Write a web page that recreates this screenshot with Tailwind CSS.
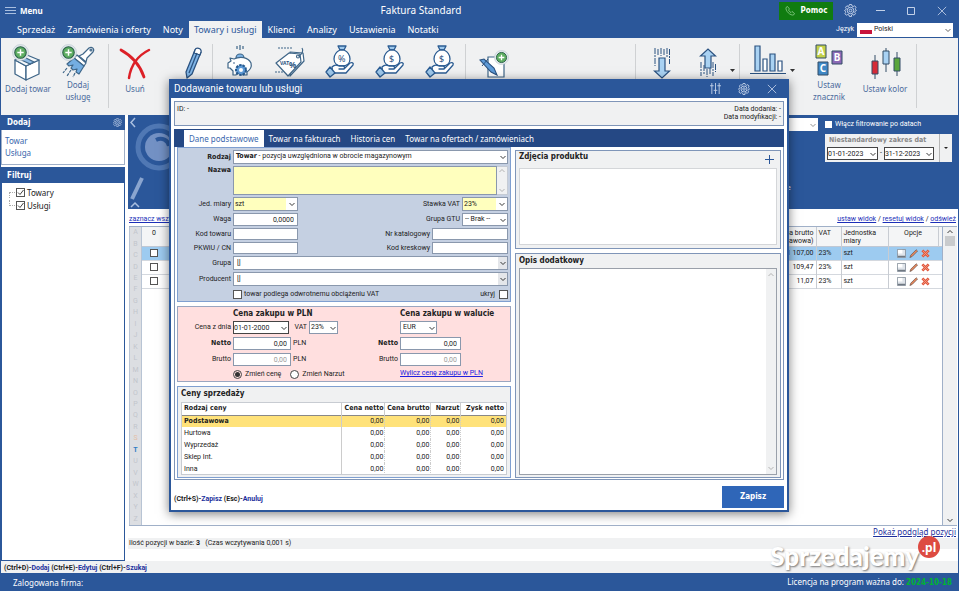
<!DOCTYPE html>
<html lang="pl">
<head>
  <meta charset="UTF-8" />
  <meta name="viewport" content="width=device-width, initial-scale=1.0" />
  <title>Faktura Standard</title>
  <script src="https://cdn.jsdelivr.net/npm/@tailwindcss/browser@4"></script>
  <style>
    body { font-family: Roboto, "Liberation Sans", sans-serif; }
    .ui { font-family: "Noto Sans", "Open Sans", sans-serif; }
    .hd { font-family: "DejaVu Sans Condensed", "DejaVu Sans", sans-serif; font-weight: 700; }
  </style>
</head>
<body class="relative h-screen flex flex-col overflow-hidden bg-[#2b579a] text-[7px] leading-[9px] text-[#222]">

  <!-- shared icons -->
  <svg class="hidden">
    <symbol id="gear" viewBox="0 0 24 24">
      <g fill="none" stroke="currentColor" stroke-width="1.8" stroke-linejoin="round">
        <path d="M10 1h4l.8 2.700 2.200 1 2.600-1.400 2.600 2.800-1.400 2.500.9 2.200L23 12l-2.300 1.200-.9 2.200 1.400 2.500-2.600 2.800-2.600-1.400-2.200 1L14 23h-4l-.8-2.700-2.200-1-2.600 1.400-2.600-2.800 1.400-2.500-.9-2.200L1 12l2.300-1.200.9-2.200-1.400-2.500 2.600-2.800L8 4.700l1.200-1z" />
        <circle cx="12" cy="12" r="6" />
        <circle cx="12" cy="12" r="2.500" />
      </g>
    </symbol>
    <symbol id="chev" viewBox="0 0 8 8">
      <path d="M1.500 3 4 5.500 6.500 3" fill="none" stroke="currentColor" stroke-width=".9" />
    </symbol>
    <symbol id="tick" viewBox="0 0 9 9">
      <path d="M2 4.500 4 6.500 7.500 2" fill="none" stroke="#444" stroke-width="1" />
    </symbol>
    <symbol id="close" viewBox="0 0 12 12">
      <path d="M1 1l10 10M11 1 1 11" fill="none" stroke="currentColor" stroke-width="1" />
    </symbol>
    <symbol id="plusball" viewBox="0 0 16 16">
      <circle cx="8" cy="8" r="7.500" fill="#e3e8ec" stroke="#b9c6cf" stroke-width=".6" />
      <circle cx="8" cy="8" r="5.400" fill="#5fae62" stroke="#275f47" stroke-width="1" />
      <path d="M8 5v6M5 8h6" stroke="#fff" stroke-width="1.400" />
    </symbol>
    <symbol id="bag" viewBox="0 0 30 34">
      <g stroke="#2b5c92" stroke-width="1.300" stroke-linejoin="round" stroke-linecap="round">
        <path d="M13 2h8l-2 4h-4z" fill="#9fc9ec" />
        <path d="M15 6h4c4 2 6 6 6 9 0 5-4 7-8 7s-8-2-8-7c0-3 2-7 6-9z" fill="#fff" />
        <path d="M7 23c3-3 5-2 7-1h4c2 0 2 3 0 3h-4 5l6-6c2-1 4 0 3 2l-7 8H10l-2 1z" fill="#fff" />
        <path d="M5 23l5 6-5 4-4-5z" fill="#9fc9ec" />
      </g>
    </symbol>
    <symbol id="floppy" viewBox="0 0 10 10">
      <path d="M.5.5h9v9h-9z" fill="#dfe4ea" stroke="#87919c" />
      <path d="M1 1h5v4H1z" fill="#fff" /><path d="M1 7.500h8V9H1z" fill="#6f7882" />
    </symbol>
    <symbol id="edit" viewBox="0 0 10 10">
      <path d="M1 9.500 2 6.800l6-6 1.500 1.500-6 6z" fill="#e8875a" stroke="#5b4a44" stroke-width=".7" />
    </symbol>
    <symbol id="del" viewBox="0 0 10 10">
      <path d="M1.500 1.500l7 7M8.500 1.500l-7 7" stroke="#e0573e" stroke-width="3" />
      <path d="M2 2l6 6M8 2 2 8" stroke="#f39a80" stroke-width="1" />
    </symbol>
  </svg>

  <!-- title bar -->
  <header class="ui relative flex h-[21px] flex-none items-center justify-between pl-[5px] pr-[12px] text-white">
    <button class="flex items-center gap-[4px]">
      <svg class="h-[8px] w-[11px]" viewBox="0 0 11 8"><path d="M0 .5h11M0 3.500h11M0 6.500h11" stroke="#a9bfe0" /></svg>
      <span class="text-[8px] font-bold">Menu</span>
    </button>
    <h1 class="pointer-events-none absolute inset-x-0 pr-[117px] text-center text-[10px] leading-[21px]">Faktura Standard</h1>
    <div class="flex items-center text-[#c3d1e8]">
      <button class="hd flex h-[18px] w-[54px] items-center justify-center gap-[6px] bg-[#107c10] text-[8px] text-white">
        <svg class="h-[10px] w-[10px]" viewBox="0 0 10 10"><path d="M1 1.500 2.500.5l2 2.500-1 1c.5 1.200 1.300 2 2.500 2.500l1-1 2.500 2-1 1.500C5.500 9.800.2 5 1 1.500z" fill="none" stroke="#8fd08f" stroke-width=".8" /></svg>
        Pomoc
      </button>
      <button class="ml-[11px]" aria-label="Opcje"><svg class="h-[13px] w-[13px]"><use href="#gear" /></svg></button>
      <button class="ml-[19px]" aria-label="Minimalizuj"><svg class="h-[9px] w-[9px]" viewBox="0 0 9 9"><path d="M0 4.500h9" stroke="currentColor" /></svg></button>
      <button class="ml-[22px]" aria-label="Maksymalizuj"><svg class="h-[8px] w-[8px]" viewBox="0 0 8 8"><path d="M.5.5h7v7h-7z" fill="none" stroke="currentColor" /></svg></button>
      <button class="ml-[22px]" aria-label="Zamknij"><svg class="h-[10px] w-[10px]"><use href="#close" /></svg></button>
    </div>
  </header>

  <!-- main tabs -->
  <nav class="flex h-[17px] flex-none items-stretch justify-between pl-[11px] pr-[6px] text-white">
    <div class="ui flex text-[9px] leading-[17px]">
      <a href="#" class="px-[6px]">Sprzedaż</a>
      <a href="#" class="px-[6px]">Zamówienia i oferty</a>
      <a href="#" class="px-[6px]">Noty</a>
      <a href="#" class="bg-[#f0f1f2] px-[5px] text-[#2b579a]">Towary i usługi</a>
      <a href="#" class="px-[6px]">Klienci</a>
      <a href="#" class="px-[6px]">Analizy</a>
      <a href="#" class="px-[6px]">Ustawienia</a>
      <a href="#" class="px-[6px]">Notatki</a>
    </div>
    <div class="flex items-center gap-[3px]">
      <label for="lang">Język</label>
      <div class="relative">
        <select id="lang" class="block h-[14px] w-[96px] appearance-none bg-white pl-[17px] text-[7px] text-[#222]"><option>Polski</option></select>
        <span class="pointer-events-none absolute left-[3px] top-[7px] h-[4px] w-[12px] bg-[#c8143c]"></span>
        <svg class="pointer-events-none absolute right-[1px] top-[3px] h-[8px] w-[8px] text-[#555]"><use href="#chev" /></svg>
      </div>
    </div>
  </nav>

  <!-- ribbon -->
  <section class="ui ml-px mr-px flex h-[77px] flex-none items-start bg-[#f0f1f2] pl-[2px] pt-[6px] text-center text-[8px] leading-[12px] text-[#4a6a9c]">
    <button class="flex w-[50px] flex-none flex-col items-center gap-[1px]">
      <svg class="h-[38px] w-[32px]" viewBox="0 0 32 38">
        <g stroke="#3f6688" stroke-width="1.300" stroke-linejoin="round">
          <path d="M3 16l11 6v14L3 30z" fill="#fff" /><path d="M14 22l13-6v14l-13 6z" fill="#fff" />
          <path d="M3 16l12-5 12 5-13 6z" fill="#f4f8fb" /><path d="M6 14.500l12 5.500 4-2-11-5.500z" fill="#8ebce6" />
        </g>
        <use href="#plusball" x="0" y="0" width="17" height="17" />
      </svg>
      Dodaj towar
    </button>
    <button class="flex w-[50px] flex-none flex-col items-center">
      <svg class="h-[35px] w-[36px]" viewBox="0 0 36 35">
        <g stroke="#3f6688" stroke-width="1.200" stroke-linejoin="round">
          <path d="M19 12l4-2 6-6c3-2 6 1 4 4l-6 6-1 4z" fill="#fff" /><circle cx="31" cy="6" r="1" fill="#fff" />
          <path d="M17 11l9 8-2 3-10-8z" fill="#fff" />
          <path d="M14 14l10 8-5 8-3-2 1-3-4 1-2-2 2-3-4 1-2-2z" fill="#74aee2" />
          <path d="M7 24l-4 5M11 26l-4 6M15 29l-2 4" stroke-dasharray="3 1" />
        </g>
        <use href="#plusball" x="0" y="0" width="17" height="17" />
      </svg>
      <span class="w-[30px]">Dodaj usługę</span>
    </button>
    <span class="ml-[5px] h-[64px] w-px bg-[#cfd1d3]"></span>
    <button class="flex w-[52px] flex-none flex-col items-center gap-[1px]">
      <svg class="h-[38px] w-[32px]" viewBox="0 0 32 38"><g fill="none" stroke="#dc2027" stroke-linecap="round"><path d="M2 6c11 6 19 15 23 27" stroke-width="2.800" /><path d="M30 6C20 11 12 20 10 34" stroke-width="2.500" /></g></svg>
      Usuń
    </button>
    <button class="ml-[13px] w-[38px] flex-none" aria-label="Edytuj">
      <svg class="mx-auto h-[36px] w-[20px]" viewBox="0 0 20 36"><g stroke="#2b5280" stroke-width="1.300" stroke-linejoin="round"><path d="M12 6l6 2L9 30l-5 4-1-6z" fill="#80b5e6" /><path d="M12 6c1-3 7-2 6 2l-1 3-6-2z" fill="#fff" /><path d="M14 9 6 29" fill="none" /></g></svg>
    </button>
    <span class="h-[64px] w-px bg-[#cfd1d3]"></span>
    <button class="ml-[2px] w-[50px] flex-none" aria-label="Magazyn">
      <svg class="mx-auto h-[34px] w-[28px]" viewBox="0 0 28 34"><g stroke="#3f6688" stroke-width="1.200" stroke-linejoin="round"><path d="M14 1v5M11 2v3M17 2v3" fill="none" /><path d="M10 14a4 4 0 1 1 8 0z" fill="#80b5e6" /><path d="M4 14l4 1c6-3 14-2 17 4 1 4-1 7-4 9v3h-4l-1-2h-5l-1 2H7v-4l-3-3H2v-5l3-2z" fill="#fff" /></g>
        <circle cx="8" cy="19" r=".8" fill="#2b5280" />
        <circle cx="15" cy="26" r="5" fill="#5e9bd8" stroke="#275a8e" stroke-width="2" stroke-dasharray="2.500 1" /><circle cx="15" cy="26" r="2" fill="#fff" /></svg>
    </button>
    <button class="w-[50px] flex-none" aria-label="Rabaty">
      <svg class="mx-auto h-[34px] w-[32px]" viewBox="0 0 32 34"><g fill="#fff" stroke="#3f6688" stroke-width="1.200" stroke-linejoin="round"><path d="M16 8 29 9l1 8-14 15z" /><path d="M2 19 15 9l11 1 1 8-13 14z" /><circle cx="24" cy="12.500" r="1.500" /><path d="M24 12c4-1 6-5 4-8" fill="none" /><path d="M4 4h14M1 28h9" stroke-dasharray="2 1" /></g>
        <g fill="#2b5280" font-weight="700"><text x="6" y="21" font-size="5">VAT</text><text x="15" y="24" font-size="8">%</text></g></svg>
    </button>
    <button class="w-[50px] flex-none" aria-label="Narzut procentowy">
      <svg class="mx-auto h-[34px] w-[30px]" viewBox="0 0 30 34"><use href="#bag" width="30" height="34" /><text x="13" y="18" font-size="9" fill="#2b5280">%</text></svg>
    </button>
    <button class="w-[50px] flex-none" aria-label="Ceny netto">
      <svg class="mx-auto h-[34px] w-[30px]" viewBox="0 0 30 34"><use href="#bag" width="30" height="34" /><text x="14" y="18" font-size="9" fill="#2b5280">$</text></svg>
    </button>
    <button class="w-[50px] flex-none" aria-label="Ceny brutto">
      <svg class="mx-auto h-[34px] w-[30px]" viewBox="0 0 30 34"><use href="#bag" width="30" height="34" /><text x="14" y="18" font-size="9" fill="#2b5280">$</text></svg>
    </button>
    <span class="h-[64px] w-px bg-[#cfd1d3]"></span>
    <button class="w-[56px] flex-none" aria-label="Nowa notatka">
      <svg class="mx-auto h-[36px] w-[30px]" viewBox="0 0 30 36"><path d="M9 13h16v20H9z" fill="#fff" stroke="#3f6688" stroke-width="1.200" /><path d="M1 16l4-1 10 9 3 7-6-3z" fill="#5e9bd8" stroke="#2b5280" stroke-width="1.100" /><path d="M3 22l6-7" stroke="#2b5280" /><use href="#plusball" x="15" y="6" width="15" height="15" /></svg>
    </button>
    <span class="ml-[113px] h-[64px] w-px bg-[#cfd1d3]"></span>
    <button class="w-[52px] flex-none" aria-label="Importuj">
      <svg class="mx-auto h-[36px] w-[18px]" viewBox="0 0 18 36"><path d="M6 14h6v13h4.500L9 34l-7.500-7H6z" fill="#a9d2f3" stroke="#2b5280" stroke-width="1.200" /><path d="M2 4v18M5 5v7M8 4v8M11 5v7M14 4v10M16.500 5v15" stroke="#2b5280" stroke-dasharray="6 1 2 1" /></svg>
    </button>
    <button class="flex w-[48px] flex-none items-end" aria-label="Eksportuj">
      <svg class="ml-[11px] h-[36px] w-[18px]" viewBox="0 0 18 36"><path d="M6 24V12H1.500L9 5l7.500 7H12v12z" fill="#a9d2f3" stroke="#2b5280" stroke-width="1.200" /><path d="M2 18v14M5 21v9M8 25v8M11 24v7M14 18v14M16.500 20v8" stroke="#2b5280" stroke-dasharray="6 1 2 1" /></svg>
      <svg class="mb-[8px] ml-[13px] h-[3px] w-[5px]" viewBox="0 0 5 3"><path d="M0 0h5L2.500 3z" fill="#333" /></svg>
    </button>
    <span class="ml-[3px] h-[64px] w-px bg-[#cfd1d3]"></span>
    <button class="flex w-[62px] flex-none items-end" aria-label="Statystyki">
      <svg class="ml-[10px] h-[32px] w-[36px]" viewBox="0 0 36 32"><g stroke="#2b5280" stroke-width="1.200"><path d="M5 2h5v25H5zM20 10h5v17h-5z" fill="#a9d2f3" /><path d="M13 15h4v12h-4zM28 17h4v10h-4z" fill="#fff" /><path d="M0 29.500h36" /></g></svg>
      <svg class="mb-[4px] ml-[4px] h-[3px] w-[5px]" viewBox="0 0 5 3"><path d="M0 0h5L2.500 3z" fill="#333" /></svg>
    </button>
    <button class="flex w-[54px] flex-none flex-col items-center gap-[1px]">
      <svg class="h-[34px] w-[28px]" viewBox="0 0 28 34">
        <g stroke="#334d66"><path d="M1 1h10v13H1z" fill="#c3d14b" /><path d="M17 7h10v13H17z" fill="#8b69b5" /><path d="M3 18h10v13H3z" fill="#3f87c4" /></g>
        <g fill="#fff" font-size="10" font-weight="700" text-anchor="middle"><text x="6" y="11">A</text><text x="22" y="17">B</text><text x="8" y="28">C</text></g>
      </svg>
      <span class="w-[36px]">Ustaw znacznik</span>
    </button>
    <button class="flex w-[58px] flex-none flex-col items-center gap-[1px]">
      <svg class="h-[38px] w-[32px]" viewBox="0 0 32 38"><path d="M6 11v24M17 4v24M28 8v24" stroke="#334d66" /><g stroke="#334d66"><path d="M3 17h6v13H3z" fill="#d52b38" /><path d="M14 7h6v13h-6z" fill="#a9d2f3" /><path d="M25 14h6v13h-6z" fill="#5aa63c" /></g></svg>
      Ustaw kolor
    </button>
    <span class="ml-[2px] h-[64px] w-px bg-[#cfd1d3]"></span>
  </section>

  <!-- workspace -->
  <main class="ml-px mr-px flex min-h-0 flex-1 gap-[3px] bg-white">
    <aside class="flex w-[124px] flex-none flex-col">
      <h2 class="hd flex h-[15px] flex-none items-center justify-between bg-[#2b579a] pl-[6px] pr-[3px] text-[8px] text-white">Dodaj <svg class="h-[9px] w-[9px] text-[#b9c9e4]"><use href="#gear" /></svg></h2>
      <div class="ui flex h-[35px] flex-none flex-col border border-t-0 border-[#a0b0c8] px-[3px] pt-[5px] text-[8px] leading-[12px] text-[#3a67ad]">
        <a href="#">Towar</a>
        <a href="#">Usługa</a>
      </div>
      <h2 class="hd mt-[2px] flex h-[16px] flex-none items-center bg-[#2b579a] pl-[6px] text-[8px] text-white">Filtruj</h2>
      <div class="flex min-h-0 flex-1 flex-col gap-[2px] border border-t-0 border-[#2b579a] pl-[7px] pt-[4px]">
        <label class="ui flex items-center text-[8px]"><span class="mr-[1px] mt-[5px] h-[6px] w-[6px] border-l border-t border-dotted border-[#aaa]"></span><span class="relative mr-[2px]"><input type="checkbox" checked class="block h-[9px] w-[9px] appearance-none border border-[#555]" /><svg class="pointer-events-none absolute inset-0 h-[9px] w-[9px]"><use href="#tick" /></svg></span>Towary</label>
        <label class="ui flex items-center text-[8px]"><span class="mb-[5px] mr-[1px] h-[6px] w-[6px] border-b border-l border-dotted border-[#aaa]"></span><span class="relative mr-[2px]"><input type="checkbox" checked class="block h-[9px] w-[9px] appearance-none border border-[#555]" /><svg class="pointer-events-none absolute inset-0 h-[9px] w-[9px]"><use href="#tick" /></svg></span>Usługi</label>
      </div>
    </aside>

    <section class="flex min-w-0 flex-1 flex-col">
      <!-- search band -->
      <div class="relative flex h-[94px] flex-none items-start justify-end gap-[7px] overflow-hidden bg-[#2b579a] pr-[6px] pt-[3px] text-white">
        <svg class="absolute left-0 top-0 h-[94px] w-[60px]" viewBox="0 0 60 94">
          <circle cx="31" cy="32" r="21" fill="none" stroke="#5078b4" stroke-width="5" />
          <circle cx="31" cy="32" r="14" fill="#7391c4" /><path d="M28 25c6-3 12 0 13 6" fill="none" stroke="#2b579a" stroke-width="4" />
          <path d="M14 63 4 84" stroke="#8aa5cf" stroke-width="4" />
          <path d="M7 3 3 7.500 7 12M3 92l4-4 4 4" fill="none" stroke="#a9bfe0" stroke-width="1.500" />
        </svg>
        <span class="absolute left-[659px] top-[69px]">e</span>
        <div class="relative w-[90px]">
          <select aria-label="Szukaj w" class="block h-[13px] w-full appearance-none bg-white"><option></option></select>
          <svg class="absolute right-[1px] top-[3px] h-[8px] w-[8px] text-[#888]"><use href="#chev" /></svg>
        </div>
        <div class="w-[127px]">
          <label class="flex h-[13px] items-center gap-[3px]"><input type="checkbox" class="h-[7px] w-[7px] appearance-none bg-white" />Włącz filtrowanie po datach</label>
          <div class="mt-[3px] flex h-[28px] bg-[#f0f1f2] text-[#222]">
            <div class="flex-1 border-r border-[#b5b5b5] px-[2px] pt-[2px]">
              <div class="hd pl-[2px] text-[7px] text-[#888]">Niestandardowy zakres dat</div>
              <div class="mt-[2px] flex items-center gap-[2px]">
                <span class="relative"><input type="text" aria-label="Od" value="01-01-2023" class="block h-[13px] w-[51px] border border-[#444] bg-white" /><svg class="absolute right-[1px] top-[3px] h-[8px] w-[8px]"><use href="#chev" /></svg></span>
                -
                <span class="relative"><input type="text" aria-label="Do" value="31-12-2023" class="block h-[13px] w-[50px] border border-[#444] bg-white" /><svg class="absolute right-[1px] top-[3px] h-[8px] w-[8px]"><use href="#chev" /></svg></span>
              </div>
            </div>
            <button class="flex w-[12px] items-center justify-center" aria-label="Zakres"><svg class="h-[2px] w-[4px]" viewBox="0 0 4 2"><path d="M0 0h4L2 2z" fill="#222" /></svg></button>
          </div>
        </div>
      </div>

      <div class="flex h-[17px] flex-none items-center justify-between pl-px pr-[2px] pt-[4px]">
        <a href="#" class="text-[#1c2fb8] underline">zaznacz wszystko</a>
        <span><a href="#" class="text-[#1c2fb8] underline">ustaw widok</a> / <a href="#" class="text-[#1c2fb8] underline">resetuj widok</a> / <a href="#" class="text-[#1c2fb8] underline">odśwież</a></span>
      </div>

      <!-- items grid -->
      <div class="mx-[1px] flex min-h-0 flex-1 border-b border-t border-[#a0b0c8]">
        <div id="letters" class="flex w-[13px] flex-none flex-col justify-around border-x border-[#b8c4d4] bg-[#dcdee2] text-center text-[#c2c5cc]"></div>
        <div class="min-w-0 flex-1 border-r border-[#a0b0c8]">
          <table class="w-full table-fixed border-collapse">
            <colgroup><col class="w-[24px]" /><col /><col class="w-[60px]" /><col class="w-[25px]" /><col class="w-[47px]" /><col class="w-[50px]" /><col class="w-[4px]" /></colgroup>
            <thead>
              <tr class="h-[19px] border-b border-[#c0c8d4] bg-[#f4f5f6] align-top leading-[8px]">
                <th class="pt-[2px] font-normal">0</th><th></th>
                <th class="border-r border-[#c8ccd2] pr-[2px] pt-[2px] text-right font-normal">Cena brutto (podstawowa)</th>
                <th class="border-r border-[#c8ccd2] pl-[2px] pt-[2px] text-left font-normal">VAT</th>
                <th class="border-r border-[#c8ccd2] pl-[2px] pt-[2px] text-left font-normal">Jednostka miary</th>
                <th class="border-r border-[#c8ccd2] pt-[2px] font-normal">Opcje</th><th></th>
              </tr>
            </thead>
            <tbody id="items"></tbody>
          </table>
        </div>
        <div class="flex w-[14px] flex-none flex-col items-center justify-between bg-[#f0f1f2] py-[1px]">
          <div class="flex flex-col items-center"><svg class="h-[8px] w-[8px] rotate-180"><use href="#chev" /></svg><span class="h-[10px] w-[10px] bg-[#c9cbcd]"></span></div>
          <svg class="h-[8px] w-[8px]"><use href="#chev" /></svg>
        </div>
      </div>
      <a href="#" class="ui flex-none self-end px-[2px] text-[8px] leading-[12px] text-[#1c2f9c] underline">Pokaż podgląd pozycji</a>
      <p class="flex h-[11px] flex-none items-center whitespace-pre bg-[#f0f1f2] px-[1px]">Ilość pozycji w bazie: <b>3</b>   (Czas wczytywania 0,001 s)</p>
      <div class="h-[12px] flex-none"></div>
    </section>
  </main>
  <p class="mx-px h-[12px] flex-none bg-[#f0f1f2] px-[3px] font-bold leading-[14px]">(Ctrl+D)-<a href="#" class="text-[#1c2f9c]">Dodaj</a> (Ctrl+E)-<a href="#" class="text-[#1c2f9c]">Edytuj</a> (Ctrl+F)-<a href="#" class="text-[#1c2f9c]">Szukaj</a></p>

  <footer class="ui flex h-[18px] flex-none items-center justify-between pl-[13px] pr-[7px] text-[8px] text-white">
    <span>Zalogowana firma:</span>
    <span>Licencja na program ważna do: <b class="hd text-[#00b432]">2024-10-18</b></span>
  </footer>

  <!-- dialog -->
  <div role="dialog" aria-labelledby="dlg-title" class="absolute bottom-[79px] left-[169px] right-[170px] top-[79px] flex flex-col border-2 border-t-0 border-[#2b579a] bg-white shadow-[0_2px_10px_rgba(0,0,0,0.5)]">
    <div class="flex h-[19px] flex-none items-center justify-between bg-[#2b579a] pl-[3px] pr-[10px] text-[#c3d1e8]">
      <h2 id="dlg-title" class="text-[10px] text-white">Dodawanie towaru lub usługi</h2>
      <div class="flex items-center gap-[17px]">
        <button aria-label="Filtry"><svg class="block h-[11px] w-[11px]" viewBox="0 0 12 12"><path d="M2 0v12M6 0v12M10 0v12M0 3h4M4 8h4M8 3h4" stroke="currentColor" fill="none" /></svg></button>
        <button aria-label="Opcje okna"><svg class="block h-[12px] w-[12px]"><use href="#gear" /></svg></button>
        <button aria-label="Zamknij okno"><svg class="block h-[10px] w-[10px]"><use href="#close" /></svg></button>
      </div>
    </div>
    <div class="mx-[3px] mt-[3px] flex h-[25px] flex-none justify-between border border-[#7f95b8] bg-[#f0f1f2] px-[2px] pt-[3px] leading-[8px]">
      <span>ID: -</span>
      <span class="text-right">Data dodania: -<br />Data modyfikacji: -</span>
    </div>
    <nav class="ui mx-[3px] mt-[3px] flex h-[18px] flex-none bg-[#254884] pl-[10px] text-[8px] leading-[19px] text-white">
      <a href="#" class="mt-[1px] bg-white px-[5px] leading-[18px] text-[#3a67ad]">Dane podstawowe</a>
      <a href="#" class="px-[5px]">Towar na fakturach</a>
      <a href="#" class="px-[5px]">Historia cen</a>
      <a href="#" class="px-[5px]">Towar na ofertach / zamówieniach</a>
    </nav>

    <div class="mx-[3px] flex min-h-0 flex-1 gap-[4px] border border-t-0 border-[#7f95b8] px-[2px] pb-px">
      <!-- left column -->
      <div class="flex min-w-0 flex-[334] flex-col gap-[4px]">
        <form class="flex flex-none flex-col gap-[2px] border border-[#7f9fd0] bg-[#c5d0e2] pr-[2px] pt-[2px]">
          <div class="flex items-center gap-[2px]">
            <label for="rodzaj" class="hd w-[53px] text-right">Rodzaj</label>
            <div class="relative flex-1">
              <select id="rodzaj" class="block h-[14px] w-full appearance-none border border-[#8a98ad] bg-white"><option value="towar"></option></select>
              <span class="pointer-events-none absolute left-[3px] top-[2px]"><b class="hd">Towar</b> - pozycja uwzględniona w obrocie magazynowym</span>
              <svg class="pointer-events-none absolute right-[1px] top-[3px] h-[8px] w-[8px]"><use href="#chev" /></svg>
            </div>
          </div>
          <div class="flex items-start gap-[2px]">
            <label for="nazwa" class="hd w-[53px] text-right">Nazwa</label>
            <textarea id="nazwa" class="h-[29px] flex-1 resize-none border border-[#8a98ad] bg-[#ffffbe]"></textarea>
            <div class="-ml-[2px] flex h-[29px] w-[11px] flex-col items-center justify-between border border-l-0 border-[#c5cbd4] bg-[#f0f1f2] text-[#aaa]"><svg class="h-[8px] w-[8px] rotate-180"><use href="#chev" /></svg><svg class="h-[8px] w-[8px]"><use href="#chev" /></svg></div>
          </div>
          <div class="flex items-center gap-[2px]">
            <label for="jm" class="w-[53px] text-right">Jed. miary</label>
            <div class="relative w-[65px]"><select id="jm" class="block h-[14px] w-full appearance-none border border-[#8a98ad] bg-[#ffffbe] px-[1px]"><option>szt</option></select><span class="pointer-events-none absolute right-px top-px flex h-[12px] w-[11px] items-center justify-center bg-white"><svg class="h-[8px] w-[8px]"><use href="#chev" /></svg></span></div>
            <label for="vat" class="ml-auto">Stawka VAT</label>
            <div class="relative w-[46px]"><select id="vat" class="block h-[14px] w-full appearance-none border border-[#8a98ad] bg-[#ffffbe] px-[1px]"><option>23%</option></select><span class="pointer-events-none absolute right-px top-px flex h-[12px] w-[11px] items-center justify-center bg-white"><svg class="h-[8px] w-[8px]"><use href="#chev" /></svg></span></div>
          </div>
          <div class="flex items-center gap-[2px]">
            <label for="waga" class="w-[53px] text-right">Waga</label>
            <input id="waga" type="text" value="0,0000" class="h-[13px] w-[65px] border border-[#8a98ad] bg-white px-[3px] text-right" />
            <label for="gtu" class="ml-auto">Grupa GTU</label>
            <div class="relative w-[46px]"><select id="gtu" class="block h-[13px] w-full appearance-none border border-[#8a98ad] bg-white px-[2px]"><option>-- Brak --</option></select><svg class="pointer-events-none absolute right-[1px] top-[3px] h-[8px] w-[8px]"><use href="#chev" /></svg></div>
          </div>
          <div class="flex items-center gap-[2px]">
            <label for="kod" class="w-[53px] text-right">Kod towaru</label>
            <input id="kod" type="text" class="h-[12px] w-[65px] border border-[#8a98ad] bg-white" />
            <label for="kat" class="ml-auto">Nr katalogowy</label>
            <input id="kat" type="text" class="h-[12px] w-[76px] border border-[#8a98ad] bg-white" />
          </div>
          <div class="flex items-center gap-[2px]">
            <label for="pkwiu" class="w-[53px] text-right">PKWiU / CN</label>
            <input id="pkwiu" type="text" class="h-[12px] w-[65px] border border-[#8a98ad] bg-white" />
            <label for="kresk" class="ml-auto">Kod kreskowy</label>
            <input id="kresk" type="text" class="h-[12px] w-[76px] border border-[#8a98ad] bg-white" />
          </div>
          <div class="flex items-center gap-[2px]">
            <label for="grupa" class="w-[53px] text-right">Grupa</label>
            <div class="relative flex-1"><select id="grupa" class="block h-[14px] w-full appearance-none border border-[#8a98ad] bg-white px-[3px]"><option>[]</option></select><span class="pointer-events-none absolute right-px top-px flex h-[12px] w-[9px] items-center justify-center bg-[#e4e6ea]"><svg class="h-[8px] w-[8px]"><use href="#chev" /></svg></span></div>
          </div>
          <div class="flex items-center gap-[2px]">
            <label for="prod" class="w-[53px] text-right">Producent</label>
            <div class="relative flex-1"><select id="prod" class="block h-[14px] w-full appearance-none border border-[#8a98ad] bg-white px-[3px]"><option>[]</option></select><span class="pointer-events-none absolute right-px top-px flex h-[12px] w-[9px] items-center justify-center bg-[#e4e6ea]"><svg class="h-[8px] w-[8px]"><use href="#chev" /></svg></span></div>
          </div>
          <div class="flex h-[13px] items-center justify-between pl-[55px]">
            <label class="flex items-center gap-[2px]"><input type="checkbox" class="h-[9px] w-[9px] appearance-none border border-[#555] bg-white" />towar podlega odwrotnemu obciążeniu VAT</label>
            <label class="flex items-center gap-[4px]">ukryj<input type="checkbox" class="h-[9px] w-[9px] appearance-none border border-[#555] bg-white" /></label>
          </div>
        </form>

        <div class="flex flex-none border border-[#9aa6c0] bg-[#ffdfdf] pb-px pt-[2px]">
          <div class="flex w-[167px] flex-none flex-col gap-[3px]">
            <h3 class="hd pl-[55px] text-[8px]">Cena zakupu w PLN</h3>
            <div class="flex items-center gap-[2px]">
              <label for="dzien" class="w-[53px] text-right">Cena z dnia</label>
              <span class="relative"><input id="dzien" type="text" value="01-01-2000" class="block h-[13px] w-[56px] border border-[#444] bg-white" /><svg class="absolute right-[1px] top-[3px] h-[8px] w-[8px]"><use href="#chev" /></svg></span>
              <label for="vatz" class="w-[16px] text-right">VAT</label>
              <div class="relative w-[29px]"><select id="vatz" class="block h-[13px] w-full appearance-none border border-[#8a98ad] bg-white px-[1px]"><option>23%</option></select><svg class="pointer-events-none absolute right-[1px] top-[3px] h-[8px] w-[8px]"><use href="#chev" /></svg></div>
            </div>
            <div class="flex items-center gap-[2px]"><label for="netto" class="hd w-[53px] text-right">Netto</label><input id="netto" type="text" value="0,00" class="h-[13px] w-[58px] border border-[#8a98ad] bg-white px-[3px] text-right" />PLN</div>
            <div class="flex items-center gap-[2px]"><label for="brutto" class="w-[53px] text-right">Brutto</label><input id="brutto" type="text" value="0,00" disabled class="h-[13px] w-[58px] border border-[#8a98ad] bg-white px-[3px] text-right text-[#999]" />PLN</div>
            <div class="flex h-[11px] items-center gap-[9px] whitespace-nowrap pl-[55px]">
              <label class="flex items-center gap-[3px]"><input type="radio" name="tryb" checked class="h-[9px] w-[9px] appearance-none rounded-full border border-[#444] bg-white bg-clip-content p-[1px] checked:bg-[#333]" />Zmień cenę</label>
              <label class="flex items-center gap-[3px]"><input type="radio" name="tryb" class="h-[9px] w-[9px] appearance-none rounded-full border border-[#444] bg-white" />Zmień Narzut</label>
            </div>
          </div>
          <div class="flex flex-1 flex-col gap-[3px]">
            <h3 class="hd whitespace-nowrap pl-[55px] text-[8px]">Cena zakupu w walucie</h3>
            <div class="relative ml-[55px] w-[37px]"><select aria-label="Waluta" class="block h-[13px] w-full appearance-none border border-[#8a98ad] bg-white px-[2px]"><option>EUR</option></select><svg class="pointer-events-none absolute right-[1px] top-[3px] h-[8px] w-[8px]"><use href="#chev" /></svg></div>
            <div class="flex items-center gap-[2px]"><label for="wnetto" class="hd w-[53px] text-right">Netto</label><input id="wnetto" type="text" value="0,00" class="h-[13px] w-[61px] border border-[#8a98ad] bg-white px-[3px] text-right" /></div>
            <div class="flex items-center gap-[2px]"><label for="wbrutto" class="w-[53px] text-right">Brutto</label><input id="wbrutto" type="text" value="0,00" disabled class="h-[13px] w-[61px] border border-[#8a98ad] bg-white px-[3px] text-right text-[#999]" /></div>
            <a href="#" class="pl-[55px] text-[#2020e0] underline">Wylicz cenę zakupu w PLN</a>
          </div>
        </div>

        <div class="flex min-h-0 flex-1 flex-col gap-[3px] border border-[#7f9fd0] bg-[#f0f1f2] px-[3px] pb-[2px] pt-[2px]">
          <h3 class="hd text-[8px] leading-[10px]">Ceny sprzedaży</h3>
          <div class="min-h-0 flex-1 overflow-hidden border border-[#c8ccd2] bg-white">
            <table class="w-full table-fixed border-collapse">
              <colgroup><col /><col class="w-[43px]" /><col class="w-[46px]" /><col class="w-[30px]" /><col class="w-[46px]" /></colgroup>
              <thead>
                <tr class="hd h-[12px] border-b border-[#888]">
                  <th class="border-r border-[#ccc] pl-[2px] text-left">Rodzaj ceny</th>
                  <th class="whitespace-nowrap border-r border-[#ccc] text-right">Cena netto</th>
                  <th class="whitespace-nowrap border-r border-[#ccc] text-right">Cena brutto</th>
                  <th class="border-r border-[#ccc] text-right">Narzut</th>
                  <th class="whitespace-nowrap pr-[2px] text-right">Zysk netto</th>
                </tr>
              </thead>
              <tbody id="prices"></tbody>
            </table>
          </div>
        </div>
      </div>

      <!-- right column -->
      <div class="flex min-w-0 flex-[266] flex-col gap-[4px] pt-[3px]">
        <div class="flex h-[99px] flex-none flex-col border border-[#7f95b8] bg-[#f0f1f2] px-[3px] pb-[3px]">
          <div class="flex h-[17px] items-start justify-between pr-[3px] pt-[1px]">
            <h3 class="hd text-[8px]">Zdjęcia produktu</h3>
            <button class="mt-[3px]" aria-label="Dodaj zdjęcie"><svg class="block h-[9px] w-[9px]" viewBox="0 0 9 9"><path d="M4.500 0v9M0 4.500h9" stroke="#2b579a" /></svg></button>
          </div>
          <div class="flex-1 border border-[#d4d6d9] bg-white"></div>
        </div>
        <div class="flex min-h-0 flex-1 flex-col border border-[#7f95b8] bg-[#f0f1f2] px-[3px] pb-[2px]">
          <label for="opis" class="hd pb-[3px] pt-[2px] text-[8px]">Opis dodatkowy</label>
          <div class="flex min-h-0 flex-1 border border-[#9aa0aa]">
            <textarea id="opis" class="min-w-0 flex-1 resize-none bg-white"></textarea>
            <div class="flex w-[10px] flex-col items-center justify-between bg-[#f0f1f2] py-[2px] text-[#aaa]"><svg class="h-[8px] w-[8px] rotate-180"><use href="#chev" /></svg><svg class="h-[8px] w-[8px]"><use href="#chev" /></svg></div>
          </div>
        </div>
      </div>
    </div>

    <div class="flex h-[30px] flex-none items-center justify-between px-[3px]">
      <p class="pt-[8px] font-bold">(Ctrl+S)-<a href="#" class="text-[#1c2f9c]">Zapisz</a> (Esc)-<a href="#" class="text-[#1c2f9c]">Anuluj</a></p>
      <button class="hd mt-[3px] h-[22px] w-[62px] bg-[#2f66b8] text-[8px] text-white">Zapisz</button>
    </div>
  </div>

  <!-- site mark -->
  <div class="pointer-events-none absolute bottom-[17px] right-[19px] flex items-start">
    <span class="font-[Lato] text-[26px] font-black leading-[36px] text-white [text-shadow:1px_1px_2px_#777]">Sprzedajemy</span>
    <span class="ui -ml-[1px] -mt-[2px] flex h-[22px] w-[22px] items-center justify-center rounded-full bg-[#dd4b42] text-[12px] font-bold text-white">.pl</span>
  </div>

  <script>
    const items = ["1 107,00", "109,47", "11,07"];
    document.getElementById("items").innerHTML = items.map((price, i) => `
      <tr class="h-[14px] border-b border-[#d4d8de] ${i === 0 ? "bg-[#9dcbf0]" : "bg-white"}">
        <td><input type="checkbox" aria-label="Zaznacz" class="mx-auto block h-[8px] w-[8px] appearance-none border border-[#555] bg-white"></td>
        <td></td>
        <td class="border-r border-[#c8ccd2] pr-[2px] text-right">${price}</td>
        <td class="border-r border-[#c8ccd2] pl-[2px]">23%</td>
        <td class="border-r border-[#c8ccd2] pl-[2px]">szt</td>
        <td><div class="flex justify-center gap-[3px]">
          <svg class="h-[9px] w-[9px]"><use href="#floppy" /></svg>
          <svg class="h-[9px] w-[9px]"><use href="#edit" /></svg>
          <svg class="h-[9px] w-[9px]"><use href="#del" /></svg>
        </div></td>
        <td></td>
      </tr>`).join("");

    const prices = ["Podstawowa", "Hurtowa", "Wyprzedaż", "Sklep Int.", "Inna"];
    document.getElementById("prices").innerHTML = prices.map((name, i) => `
      <tr class="h-[12px] ${i === 0 ? "bg-[#ffe27a]" : ""}">
        <td class="border-r border-[#ccc] pl-[2px] ${i === 0 ? "hd" : ""}">${name}</td>
        <td class="border-r border-dotted border-[#ccc] text-right">0,00</td>
        <td class="border-r border-dotted border-[#ccc] text-right">0,00</td>
        <td class="border-r border-dotted border-[#ccc] text-right">0,00</td>
        <td class="pr-[2px] text-right">0,00</td>
      </tr>`).join("");

    document.getElementById("letters").innerHTML = [..."ABCDEFGHIJKLMNOPQRSTUVWXYZ"]
      .map(l => `<span class="${l === "T" ? "font-bold text-[#2f7cc4]" : l === "S" ? "text-[#e3bfa8]" : ""}">${l}</span>`).join("");
  </script>
</body>
</html>
